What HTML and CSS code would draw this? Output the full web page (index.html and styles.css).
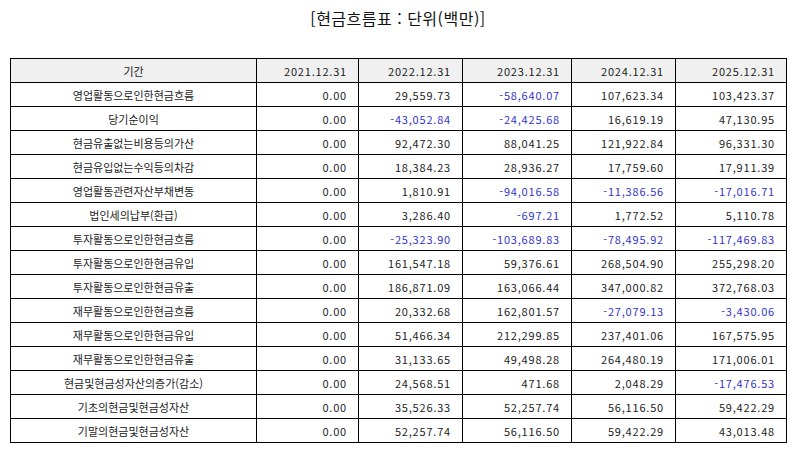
FILE: index.html
```html
<!DOCTYPE html>
<html lang="ko">
<head>
<meta charset="utf-8">
<title>현금흐름표</title>
<link rel="stylesheet" href="styles.css">
</head>
<body>
<div class="page">
  <h1 class="title">[현금흐름표 : 단위(백만)]</h1>
  <table class="cf">
    <colgroup>
      <col class="c0"><col class="c1"><col class="c2"><col class="c3"><col class="c4"><col class="c5">
    </colgroup>
    <thead>
      <tr><th class="label">기간</th><th>2021.12.31</th><th>2022.12.31</th><th>2023.12.31</th><th>2024.12.31</th><th>2025.12.31</th></tr>
    </thead>
    <tbody>
      <tr><td class="label">영업활동으로인한현금흐름</td><td>0.00</td><td>29,559.73</td><td class="neg">-58,640.07</td><td>107,623.34</td><td>103,423.37</td></tr>
      <tr><td class="label">당기순이익</td><td>0.00</td><td class="neg">-43,052.84</td><td class="neg">-24,425.68</td><td>16,619.19</td><td>47,130.95</td></tr>
      <tr><td class="label">현금유출없는비용등의가산</td><td>0.00</td><td>92,472.30</td><td>88,041.25</td><td>121,922.84</td><td>96,331.30</td></tr>
      <tr><td class="label">현금유입없는수익등의차감</td><td>0.00</td><td>18,384.23</td><td>28,936.27</td><td>17,759.60</td><td>17,911.39</td></tr>
      <tr><td class="label">영업활동관련자산부채변동</td><td>0.00</td><td>1,810.91</td><td class="neg">-94,016.58</td><td class="neg">-11,386.56</td><td class="neg">-17,016.71</td></tr>
      <tr><td class="label">법인세의납부(환급)</td><td>0.00</td><td>3,286.40</td><td class="neg">-697.21</td><td>1,772.52</td><td>5,110.78</td></tr>
      <tr><td class="label">투자활동으로인한현금흐름</td><td>0.00</td><td class="neg">-25,323.90</td><td class="neg">-103,689.83</td><td class="neg">-78,495.92</td><td class="neg">-117,469.83</td></tr>
      <tr><td class="label">투자활동으로인한현금유입</td><td>0.00</td><td>161,547.18</td><td>59,376.61</td><td>268,504.90</td><td>255,298.20</td></tr>
      <tr><td class="label">투자활동으로인한현금유출</td><td>0.00</td><td>186,871.09</td><td>163,066.44</td><td>347,000.82</td><td>372,768.03</td></tr>
      <tr><td class="label">재무활동으로인한현금흐름</td><td>0.00</td><td>20,332.68</td><td>162,801.57</td><td class="neg">-27,079.13</td><td class="neg">-3,430.06</td></tr>
      <tr><td class="label">재무활동으로인한현금유입</td><td>0.00</td><td>51,466.34</td><td>212,299.85</td><td>237,401.06</td><td>167,575.95</td></tr>
      <tr><td class="label">재무활동으로인한현금유출</td><td>0.00</td><td>31,133.65</td><td>49,498.28</td><td>264,480.19</td><td>171,006.01</td></tr>
      <tr><td class="label">현금및현금성자산의증가(감소)</td><td>0.00</td><td>24,568.51</td><td>471.68</td><td>2,048.29</td><td class="neg">-17,476.53</td></tr>
      <tr><td class="label">기초의현금및현금성자산</td><td>0.00</td><td>35,526.33</td><td>52,257.74</td><td>56,116.50</td><td>59,422.29</td></tr>
      <tr><td class="label">기말의현금및현금성자산</td><td>0.00</td><td>52,257.74</td><td>56,116.50</td><td>59,422.29</td><td>43,013.48</td></tr>
    </tbody>
  </table>
</div>
</body>
</html>
```

FILE: styles.css
```css
html, body {
  margin: 0;
  padding: 0;
  background: #ffffff;
}

.page {
  padding: 0 8px 0 10px;
  font-family: "Noto Sans CJK KR", "Noto Sans", sans-serif;
  color: #222222;
}

.title {
  margin: 0;
  height: 58px;
  padding-top: 6px;
  box-sizing: border-box;
  text-align: center;
  font-size: 16px;
  letter-spacing: 0.5px;
  font-weight: normal;
  line-height: 24px;
  color: #111111;
}

.cf {
  border-collapse: collapse;
  table-layout: fixed;
  width: 776px;
  font-size: 11px;
}

.c0 { width: 246px; }
.c1 { width: 102px; }
.c2 { width: 104px; }
.c3 { width: 109px; }
.c4 { width: 104px; }
.c5 { width: 111px; }

.cf tr {
  height: 24px;
}

.cf th,
.cf td {
  border: 1px solid #000000;
  padding: 0 11px 0 4px;
  text-align: right;
  font-weight: normal;
  line-height: 16px;
  letter-spacing: 0.8px;
  white-space: nowrap;
}

.cf thead th {
  background: #f0f0f0;
}

.cf .label {
  text-align: center;
  padding: 0 4px;
  letter-spacing: 0;
}

.cf .neg {
  color: #3333cc;
}
```
